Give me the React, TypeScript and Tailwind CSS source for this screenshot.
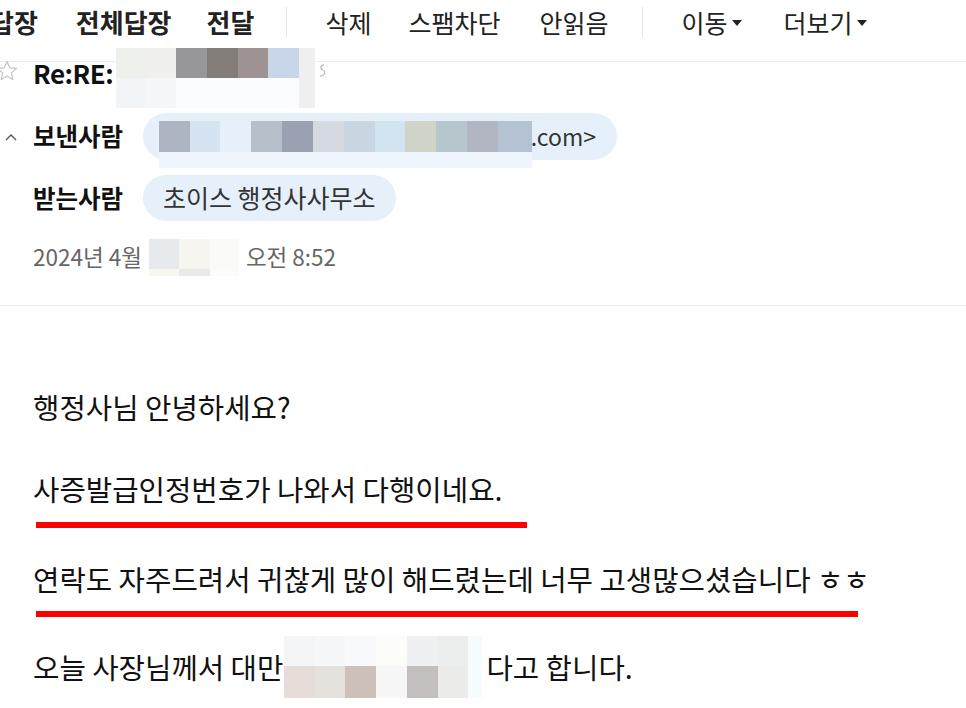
import React from "react";

const KR = "font-['Noto_Sans_CJK_KR','Noto_Sans',sans-serif]";

type Cell = { w: string; c: string };

function Mosaic({ rows }: { rows: { h: string; cells: Cell[] }[] }) {
  return (
    <div className="flex flex-col">
      {rows.map((r, i) => (
        <div key={i} className={`flex ${r.h}`}>
          {r.cells.map((cell, j) => (
            <div key={j} className={`${cell.w} ${cell.c} h-full`} />
          ))}
        </div>
      ))}
    </div>
  );
}

function Caret() {
  return (
    <svg width="12" height="8" viewBox="0 0 12 8" className="ml-[4px] mt-[2px]">
      <polygon points="1,1 11,1 6,7" fill="#222" />
    </svg>
  );
}

function Divider() {
  return <span className="h-[30px] w-px self-center bg-[#e4e4e4]" />;
}

export default function App() {
  return (
    <div className={`${KR} relative h-[708px] w-[966px] overflow-hidden bg-white text-[#111]`}>
      {/* toolbar */}
      <div className="flex h-[62px] items-start whitespace-nowrap border-b border-[#ececec] pt-[7px] text-[25px] leading-[30px] text-[#222]">
        <span className="-ml-[10px] text-[26px] font-bold">답장</span>
        <span className="ml-[38px] text-[26px] font-bold">전체답장</span>
        <span className="ml-[35px] text-[26px] font-bold">전달</span>
        <span className="ml-[32px] flex h-[30px]"><Divider /></span>
        <span className="ml-[38px]">삭제</span>
        <span className="ml-[37px]">스팸차단</span>
        <span className="ml-[39px]">안읽음</span>
        <span className="ml-[34px] flex h-[30px]"><Divider /></span>
        <span className="ml-[38px] flex items-center">이동<Caret /></span>
        <span className="ml-[40px] flex items-center">더보기<Caret /></span>
      </div>

      {/* subject */}
      <div className="relative flex h-[51px] items-start">
        <div className="w-[33px] shrink-0">
          <svg width="24" height="24" viewBox="0 0 24 24" className="-ml-[5px] -mt-[3px]">
            <polygon
              points="12,2.5 14.8,8.8 21.5,9.4 16.4,13.9 17.9,20.6 12,17.1 6.1,20.6 7.6,13.9 2.5,9.4 9.2,8.8"
              fill="none"
              stroke="#c4c4c4"
              strokeWidth="1.2"
              strokeLinejoin="round"
            />
          </svg>
        </div>
        <span className="text-[26px] font-bold leading-[22px] tracking-[-0.5px] text-[#111]">Re:RE:</span>
        <div className="absolute left-[116px] top-[-14px]">
          <Mosaic
            rows={[
              {
                h: "h-[30px]",
                cells: [
                  { w: "w-[30px]", c: "bg-[#eef0ec]" },
                  { w: "w-[30px]", c: "bg-[#f0f1ec]" },
                  { w: "w-[31px]", c: "bg-[#97979b]" },
                  { w: "w-[31px]", c: "bg-[#827d78]" },
                  { w: "w-[30px]", c: "bg-[#9f9293]" },
                  { w: "w-[31px]", c: "bg-[#c8d6ea]" },
                  { w: "w-[16px]", c: "bg-[#efefef]" },
                ],
              },
              {
                h: "h-[30px]",
                cells: [
                  { w: "w-[30px]", c: "bg-[#f2f5f8]" },
                  { w: "w-[30px]", c: "bg-[#f4f6f8]" },
                  { w: "w-[123px]", c: "bg-[#fbfcfd]" },
                  { w: "w-[16px]", c: "bg-[#efefef]" },
                ],
              },
            ]}
          />
        </div>
        <svg width="10" height="16" viewBox="0 0 10 16" className="absolute left-[317px] top-[1px]">
          <path d="M7 2 C3 2 3 6 6 7 C9 8 8 13 3 13" fill="none" stroke="#bdbdbd" strokeWidth="1.3" />
        </svg>
      </div>

      {/* sender */}
      <div className="flex h-[47px] items-center">
        <div className="flex w-[33px] shrink-0 justify-center">
          <svg width="14" height="10" viewBox="0 0 14 10" className="-ml-[12px]">
            <polyline points="2,8 7,3 12,8" fill="none" stroke="#555" strokeWidth="1.4" />
          </svg>
        </div>
        <span className="w-[110px] shrink-0 text-[24.5px] font-bold text-[#111]">보낸사람</span>
        <div className="relative flex h-[47px] w-[474px] items-center justify-end rounded-full bg-[#e6f0fb] pr-[21px] text-[23px] text-[#333]">
          <span>a.com&gt;</span>
          <div className="absolute left-[16px] top-[8px]">
            <Mosaic
              rows={[
                {
                  h: "h-[31px]",
                  cells: [
                    { w: "w-[31px]", c: "bg-[#adb5c2]" },
                    { w: "w-[30px]", c: "bg-[#d5e4f0]" },
                    { w: "w-[31px]", c: "bg-[#e6f0fb]" },
                    { w: "w-[31px]", c: "bg-[#b6c0ca]" },
                    { w: "w-[31px]", c: "bg-[#9aa1b1]" },
                    { w: "w-[31px]", c: "bg-[#d5dbe0]" },
                    { w: "w-[31px]", c: "bg-[#c9d6e1]" },
                    { w: "w-[30px]", c: "bg-[#d3e4f1]" },
                    { w: "w-[31px]", c: "bg-[#cfd3c8]" },
                    { w: "w-[31px]", c: "bg-[#b7c6cc]" },
                    { w: "w-[31px]", c: "bg-[#b2b5c2]" },
                    { w: "w-[34px]", c: "bg-[#b3c3d4]" },
                  ],
                },
                {
                  h: "h-[16px]",
                  cells: [{ w: "w-[373px]", c: "bg-[#eef5fc]" }],
                },
              ]}
            />
          </div>
        </div>
      </div>

      {/* recipient */}
      <div className="mt-[15px] flex h-[46px] items-center">
        <div className="w-[33px] shrink-0" />
        <span className="w-[110px] shrink-0 text-[24.5px] font-bold text-[#111]">받는사람</span>
        <div className="flex h-[46px] items-center rounded-full bg-[#e6f0fb] px-[20px] text-[25px] text-[#333]">
          초이스 행정사사무소
        </div>
      </div>

      {/* date */}
      <div className="mt-[18px] flex h-[36px] items-center pl-[33px] text-[22.5px] text-[#666]">
        <span>2024년 4월</span>
        <div className="ml-[7px]">
          <Mosaic
            rows={[
              {
                h: "h-[30px]",
                cells: [
                  { w: "w-[30px]", c: "bg-[#e6eaed]" },
                  { w: "w-[31px]", c: "bg-[#f7f5f0]" },
                  { w: "w-[29px]", c: "bg-[#fafaf8]" },
                ],
              },
              {
                h: "h-[7px]",
                cells: [
                  { w: "w-[30px]", c: "bg-[#f8f7ef]" },
                  { w: "w-[31px]", c: "bg-[#e9e9e9]" },
                  { w: "w-[29px]", c: "bg-[#fbfbfb]" },
                ],
              },
            ]}
          />
        </div>
        <span className="ml-[7px]">오전 8:52</span>
      </div>

      <div className="mt-[30px] border-t border-[#ececec]" />

      {/* body */}
      <div className="px-[33px] text-[28.7px] leading-[36px] text-[#111]">
        <p className="mt-[83px]">행정사님 안녕하세요?</p>
        <p className="mt-[46px]">사증발급인정번호가 나와서 다행이네요.</p>
        <div className="ml-[3px] mt-[15px] h-[6px] w-[491px] bg-[#f00]" />
        <p className="mt-[33px] whitespace-nowrap">연락도 자주드려서 귀찮게 많이 해드렸는데 너무 고생많으셨습니다 ㅎㅎ</p>
        <div className="ml-[3px] mt-[14px] h-[6px] w-[822px] bg-[#f00]" />
        <p className="mt-[32px] flex items-center whitespace-nowrap">
          <span>오늘 사장님께서 대만</span>
          <span className="-my-[14px] ml-[1px] mr-[4px]">
            <Mosaic
              rows={[
                {
                  h: "h-[30px]",
                  cells: [
                    { w: "w-[31px]", c: "bg-[#f3f5f7]" },
                    { w: "w-[30px]", c: "bg-[#f6f7f9]" },
                    { w: "w-[31px]", c: "bg-[#f7f9fb]" },
                    { w: "w-[31px]", c: "bg-[#fcfcf9]" },
                    { w: "w-[31px]", c: "bg-[#eef0f2]" },
                    { w: "w-[30px]", c: "bg-[#eceeee]" },
                    { w: "w-[14px]", c: "bg-[#f5fcfe]" },
                  ],
                },
                {
                  h: "h-[32px]",
                  cells: [
                    { w: "w-[31px]", c: "bg-[#e6ddd8]" },
                    { w: "w-[30px]", c: "bg-[#e5e1dc]" },
                    { w: "w-[31px]", c: "bg-[#cdc1b9]" },
                    { w: "w-[31px]", c: "bg-[#f7f7f8]" },
                    { w: "w-[31px]", c: "bg-[#c4bfbf]" },
                    { w: "w-[30px]", c: "bg-[#ebebea]" },
                    { w: "w-[14px]", c: "bg-[#f6fcfe]" },
                  ],
                },
              ]}
            />
          </span>
          <span>다고 합니다.</span>
        </p>
      </div>
    </div>
  );
}
